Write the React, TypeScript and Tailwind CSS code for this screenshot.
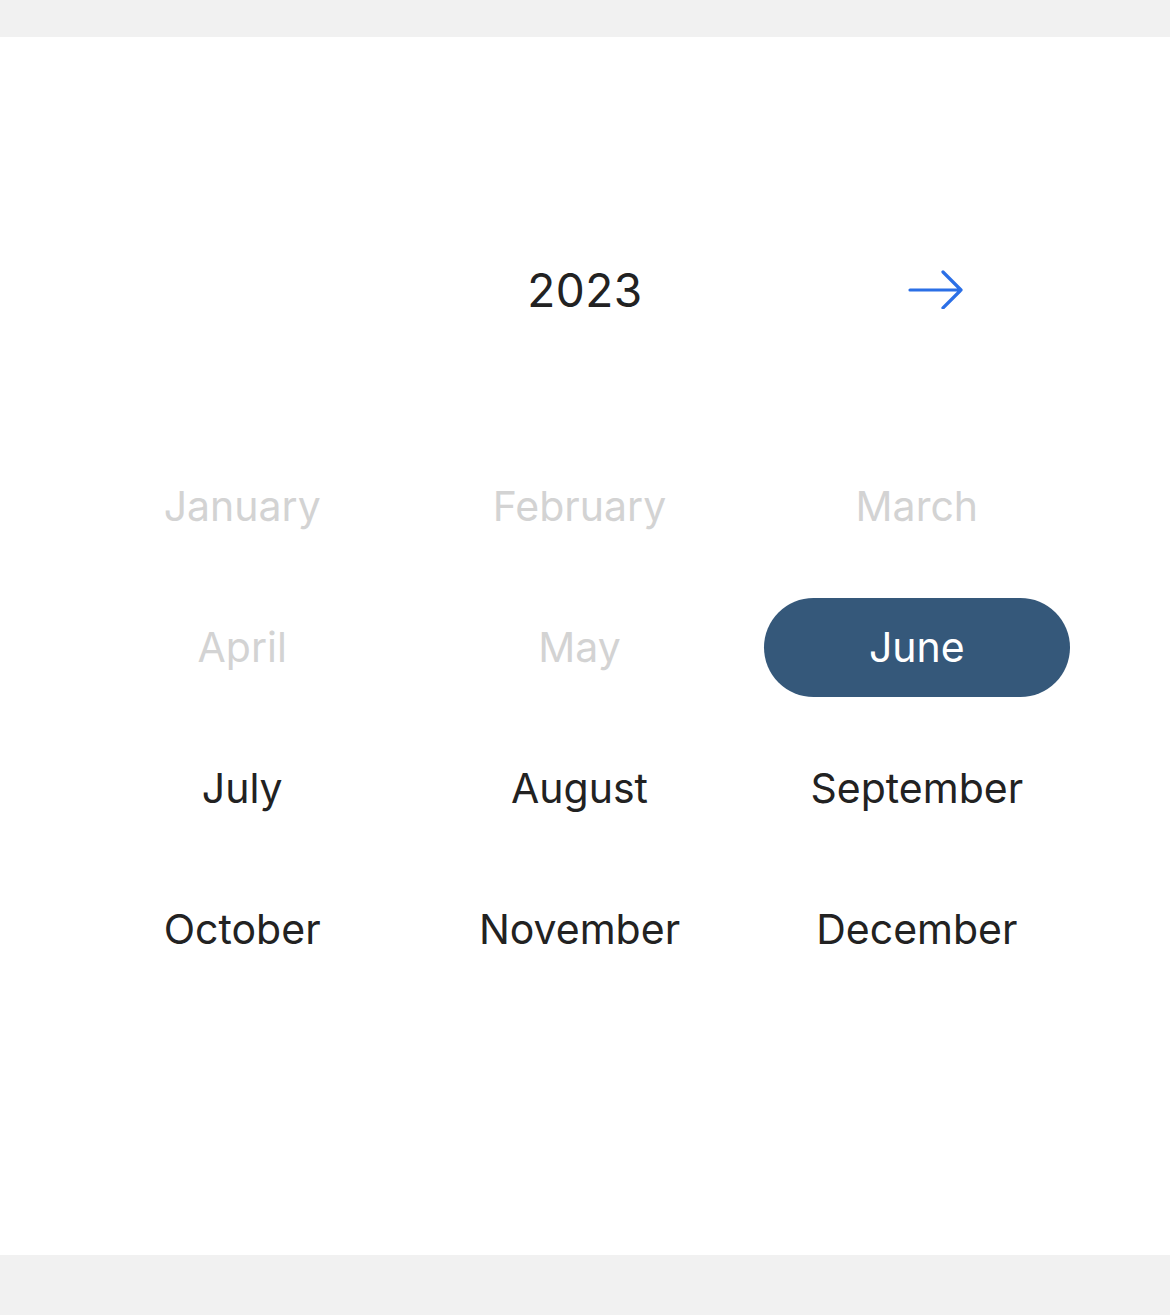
import React, { useState } from 'react';

const MONTHS = [
  'January', 'February', 'March',
  'April', 'May', 'June',
  'July', 'August', 'September',
  'October', 'November', 'December',
];

// months before the current one are shown as disabled
const CURRENT = 5;

export default function App() {
  const [selected, setSelected] = useState(5);

  return (
    <div className="min-h-[1315px] bg-[#f1f1f1] pt-[37px] pb-[60px] font-['Inter',sans-serif]">
      <div className="h-[1218px] bg-white">
        {/* Header */}
        <div className="relative flex h-[420px] items-start justify-center pt-[219px]">
          <span className="text-[46px] leading-[68px] text-[#222] tracking-[0.5px]">2023</span>
          <button type="button" className="absolute left-[906px] top-[230px] p-[2px]">
            <svg width="56" height="40" viewBox="0 0 56 40" fill="none">
              <path
                d="M2 21h51M35 3l18 18-18 18"
                stroke="#2b6fe6"
                strokeWidth="3.2"
                strokeLinecap="round"
                strokeLinejoin="round"
              />
            </svg>
          </button>
        </div>

        {/* Months */}
        <div className="ml-[89px] grid w-[981px] grid-cols-3 gap-x-[31px] gap-y-[42px]">
          {MONTHS.map((m, i) => {
            const disabled = i < CURRENT;
            const active = i === selected;
            return (
              <button
                key={m}
                type="button"
                disabled={disabled}
                onClick={() => setSelected(i)}
                className={`flex h-[99px] items-center justify-center rounded-full text-[41px] ${
                  active
                    ? 'bg-[#35587a] text-white'
                    : disabled
                    ? 'text-[#d3d3d3]'
                    : 'text-[#222]'
                }`}
              >
                {m}
              </button>
            );
          })}
        </div>
      </div>
    </div>
  );
}
